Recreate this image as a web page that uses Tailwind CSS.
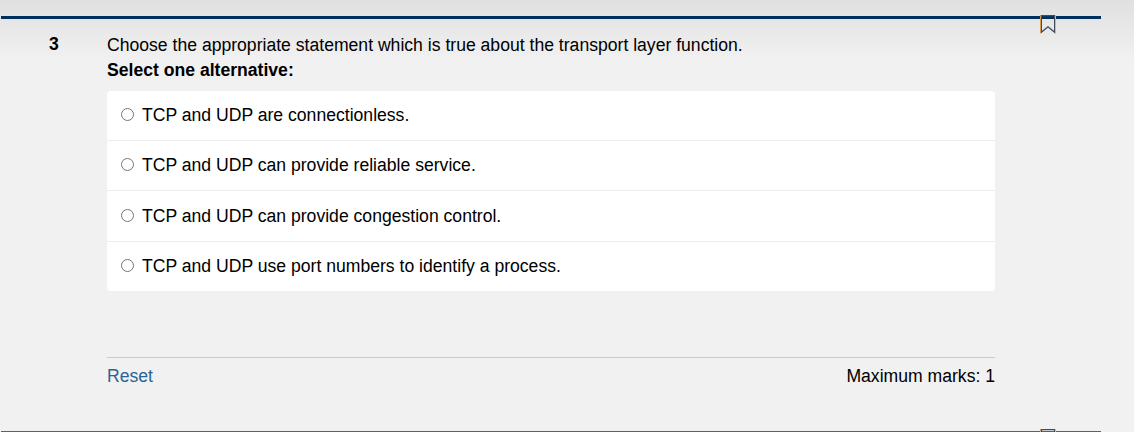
<!DOCTYPE html>
<html lang="en">
<head>
<meta charset="utf-8">
<title>Question 3</title>
<script src="https://cdn.jsdelivr.net/npm/@tailwindcss/browser@4"></script>
</head>
<body class="relative h-[432px] overflow-hidden bg-[#f1f1f1] bg-linear-to-b from-[#e0e0e0] to-[#f1f1f1] to-[60px] font-['Liberation_Sans',Arial,sans-serif] text-[17.6px] leading-[25px] text-black">
  <section class="ml-px flex h-[431px] w-[1100px] flex-col pt-4">
    <div class="h-[3px] shrink-0 bg-[#003060]"></div>
    <div class="flex pt-[13px]">
      <div class="w-[106px] shrink-0 pl-12 font-bold">3</div>
      <main class="w-[888px] pt-px">
        <p class="whitespace-nowrap">Choose the appropriate statement which is true about the transport layer function.</p>
        <p class="whitespace-nowrap font-bold">Select one alternative:</p>
        <ul class="mt-[8px] h-[200px] overflow-hidden rounded-[4px] bg-white">
          <li class="flex h-[50px] items-center gap-2 border-b border-[#ededed] pl-3.5"><span class="mb-0.5 size-[13px] rounded-full border border-[#767676]"></span>TCP and UDP are connectionless.</li>
          <li class="flex h-[50px] items-center gap-2 border-b border-[#ededed] pl-3.5"><span class="mb-0.5 size-[13px] rounded-full border border-[#767676]"></span>TCP and UDP can provide reliable service.</li>
          <li class="flex h-[51px] items-center gap-2 border-b border-[#ededed] pl-3.5"><span class="mb-0.5 size-[13px] rounded-full border border-[#767676]"></span>TCP and UDP can provide congestion control.</li>
          <li class="flex h-[49px] items-center gap-2 pl-3.5"><span class="mb-0.5 size-[13px] rounded-full border border-[#767676]"></span>TCP and UDP use port numbers to identify a process.</li>
        </ul>
        <footer class="mt-[66px] flex justify-between border-t border-[#cbcbcb] pt-[6px]">
          <a class="text-[#2a6496]">Reset</a>
          <span>Maximum marks: 1</span>
        </footer>
      </main>
    </div>
  </section>
  <div class="ml-px h-px w-[1100px] bg-[#486586]"></div>
  <svg class="absolute left-[1040px] top-[15px]" width="16" height="19" viewBox="0 0 16 19" fill="none">
    <path d="M1.3 17.3V.6H14.7V17.3L8 11.8Z" stroke="#414b59" stroke-width="1.4"/>
    <path d="M.5 0V18" stroke="#d79b58"/><path d="M15.5 0V18" stroke="#91c9dd"/>
  </svg>
  <svg class="absolute left-[1040px] top-[429px]" width="16" height="19" viewBox="0 0 16 19" fill="none">
    <path d="M1.3 17.3V.6H14.7V17.3L8 11.8Z" stroke="#414b59" stroke-width="1.4"/>
    <path d="M.5 0V18" stroke="#d79b58"/><path d="M15.5 0V18" stroke="#91c9dd"/>
  </svg>
</body>
</html>
